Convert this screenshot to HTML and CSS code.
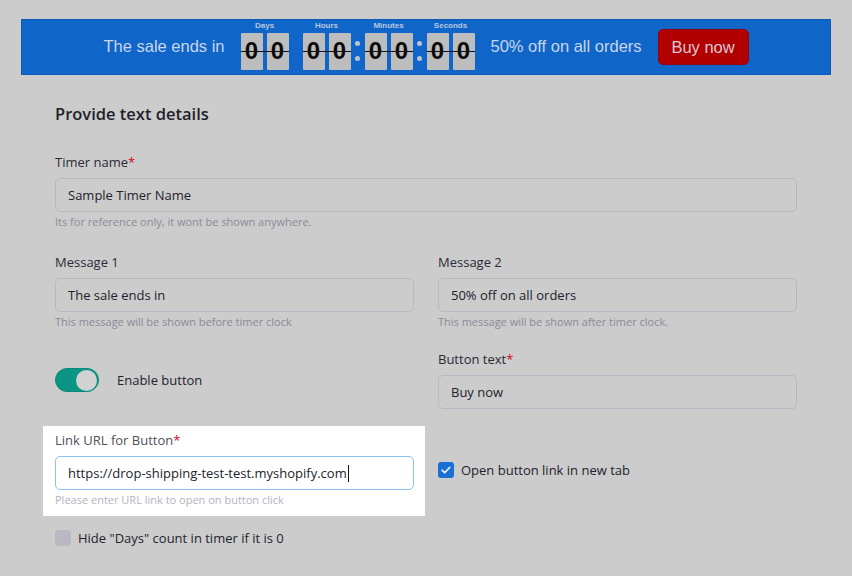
FILE: index.html
```html
<!DOCTYPE html>
<html lang="en">
<head>
    <meta charset="UTF-8">
    <meta name="viewport" content="width=device-width, initial-scale=1.0">
    <title>Countdown Timer - Text details</title>
    <link rel="stylesheet" href="styles.css">
</head>
<body>
    <div class="preview">
        <span class="preview-text">The sale ends in</span>

        <div class="timer">
            <div class="unit">
                <div class="unit-label">Days</div>
                <div class="digits"><span class="digit">0</span><span class="digit">0</span></div>
            </div>
            <div class="sep"></div>
            <div class="unit">
                <div class="unit-label">Hours</div>
                <div class="digits"><span class="digit">0</span><span class="digit">0</span></div>
            </div>
            <div class="sep colon"><i></i><i></i></div>
            <div class="unit">
                <div class="unit-label">Minutes</div>
                <div class="digits"><span class="digit">0</span><span class="digit">0</span></div>
            </div>
            <div class="sep colon"><i></i><i></i></div>
            <div class="unit">
                <div class="unit-label">Seconds</div>
                <div class="digits"><span class="digit">0</span><span class="digit">0</span></div>
            </div>
        </div>

        <span class="preview-text">50% off on all orders</span>
        <a class="preview-btn">Buy now</a>
    </div>

    <div class="form">
        <h2 class="section-title">Provide text details</h2>

        <div class="row">
            <div class="field full">
                <label>Timer name<span class="req">*</span></label>
                <div class="input">Sample Timer Name</div>
                <div class="help">Its for reference only, it wont be shown anywhere.</div>
            </div>
        </div>

        <div class="row messages">
            <div class="field">
                <label>Message 1</label>
                <div class="input">The sale ends in</div>
                <div class="help">This message will be shown before timer clock</div>
            </div>
            <div class="field">
                <label>Message 2</label>
                <div class="input">50% off on all orders</div>
                <div class="help">This message will be shown after timer clock.</div>
            </div>
        </div>

        <div class="row button-row">
            <div class="switch-line">
                <span class="switch"><span class="knob"></span></span>
                <span>Enable button</span>
            </div>
            <div class="field">
                <label>Button text<span class="req">*</span></label>
                <div class="input">Buy now</div>
            </div>
        </div>

        <div class="row link-row">
            <div class="field spotlight">
                <label>Link URL for Button<span class="req">*</span></label>
                <div class="input focused">https://drop-shipping-test-test.myshopify.com<span class="caret"></span></div>
                <div class="help">Please enter URL link to open on button click</div>
            </div>
            <div class="check-line new-tab">
                <span class="check checked">
                    <svg viewBox="0 0 16 16"><path d="M4.2 8.3l2.5 2.4 5-5.2" /></svg>
                </span>
                <span>Open button link in new tab</span>
            </div>
        </div>

        <div class="check-line hide-days">
            <span class="check"></span>
            <span>Hide "Days" count in timer if it is 0</span>
        </div>
    </div>
</body>
</html>
```

FILE: styles.css
```css
* {
    margin: 0;
    padding: 0;
    box-sizing: border-box;
}

body {
    background: #cccccc;
    font-family: "Open Sans", "Noto Sans", sans-serif;
    color: #23232e;
    width: 852px;
    height: 576px;
    overflow: hidden;
}

/* countdown bar preview */
.preview {
    margin: 19px 21px 0;
    height: 56px;
    background: #0f66c8;
    border: 1px solid #0c5bb6;
    display: flex;
    align-items: center;
    justify-content: center;
    gap: 16px;
    font-family: "Liberation Sans", Arial, sans-serif;
}

.preview-text {
    font-size: 16.5px;
    color: #c9d5e8;
    margin-top: -1px;
}

.timer {
    display: flex;
    align-items: flex-end;
    margin-bottom: 4px;
}

.unit-label {
    font-size: 8px;
    font-weight: 700;
    line-height: 10px;
    color: #b9c8df;
    text-align: center;
    margin-bottom: 2px;
}

.digits {
    position: relative;
    display: flex;
    gap: 4px;
}

.digits::after {
    content: "";
    position: absolute;
    left: 0;
    right: 0;
    top: 18px;
    height: 1px;
    background: #111;
}

.digit {
    width: 22px;
    height: 37px;
    background: #bdbdbd;
    border-radius: 1px;
    display: flex;
    align-items: center;
    justify-content: center;
    font-size: 24px;
    font-weight: 700;
    color: #0a0a0a;
}

.sep {
    width: 14px;
    height: 37px;
}

.sep.colon {
    display: flex;
    flex-direction: column;
    align-items: center;
    justify-content: center;
    gap: 10px;
}

.sep.colon i {
    width: 5px;
    height: 5px;
    border-radius: 50%;
    background: #bcc3cf;
}

.preview-btn {
    width: 91px;
    height: 36px;
    background: #b20000;
    border: 1px solid #8e0612;
    border-radius: 5px;
    display: flex;
    align-items: center;
    justify-content: center;
    font-size: 16.5px;
    color: #dcc8d0;
}

/* form */
.form {
    padding: 0 55px;
}

.section-title {
    margin: 27px 0 28px;
    font-size: 16.5px;
    line-height: 24px;
    font-weight: 600;
    color: #1f1f2b;
}

.row {
    display: grid;
    grid-template-columns: 1fr 1fr;
    column-gap: 24px;
    margin-bottom: 25px;
}

.row.messages {
    margin-bottom: 22px;
}

.row.button-row {
    margin-bottom: 23px;
}

.row.link-row {
    margin-bottom: 13px;
}

.field.full {
    grid-column: 1 / -1;
}

.field label {
    display: block;
    font-size: 13px;
    line-height: 16px;
    margin-bottom: 8px;
    color: #2a2a36;
}

.req {
    color: #d0061c;
}

.input {
    height: 34px;
    border: 1px solid #b9b9c5;
    border-radius: 5px;
    padding: 0 12px;
    display: flex;
    align-items: center;
    font-size: 13px;
    color: #22222c;
}

.help {
    margin-top: 3px;
    font-size: 11px;
    line-height: 14px;
    color: #8b8b98;
}

/* highlighted field */
.spotlight {
    background: #fff;
    margin: -6px -11px 0 -12px;
    padding: 6px 11px 9px 12px;
}

.spotlight label {
    color: #50505c;
}

.input.focused {
    background: #fff;
    border-color: #8ec0f3;
}

.caret {
    width: 1px;
    height: 17px;
    background: #111;
    margin-left: 1px;
}

.spotlight .help {
    color: #b4b4be;
}

/* toggle */
.switch-line {
    display: flex;
    align-items: center;
    gap: 18px;
    margin-top: 17px;
    align-self: start;
    font-size: 13px;
}

.switch {
    width: 44px;
    height: 24px;
    border-radius: 12px;
    background: #0b9585;
    border: 1px solid #0a8a7c;
    display: flex;
    align-items: center;
    justify-content: flex-end;
    padding-right: 1px;
}

.knob {
    width: 21px;
    height: 21px;
    border-radius: 50%;
    background: #d2d2d2;
}

/* checkboxes */
.check-line {
    display: flex;
    align-items: center;
    gap: 7px;
    font-size: 13px;
}

.new-tab {
    align-self: start;
    margin-top: 29px;
}

.check {
    width: 16px;
    height: 16px;
    border-radius: 3px;
    background: #b9b9c3;
    display: flex;
}

.check.checked {
    background: #1a6fd5;
}

.check svg {
    width: 16px;
    height: 16px;
    fill: none;
    stroke: #e8eef8;
    stroke-width: 1.8;
    stroke-linecap: round;
    stroke-linejoin: round;
}
```
